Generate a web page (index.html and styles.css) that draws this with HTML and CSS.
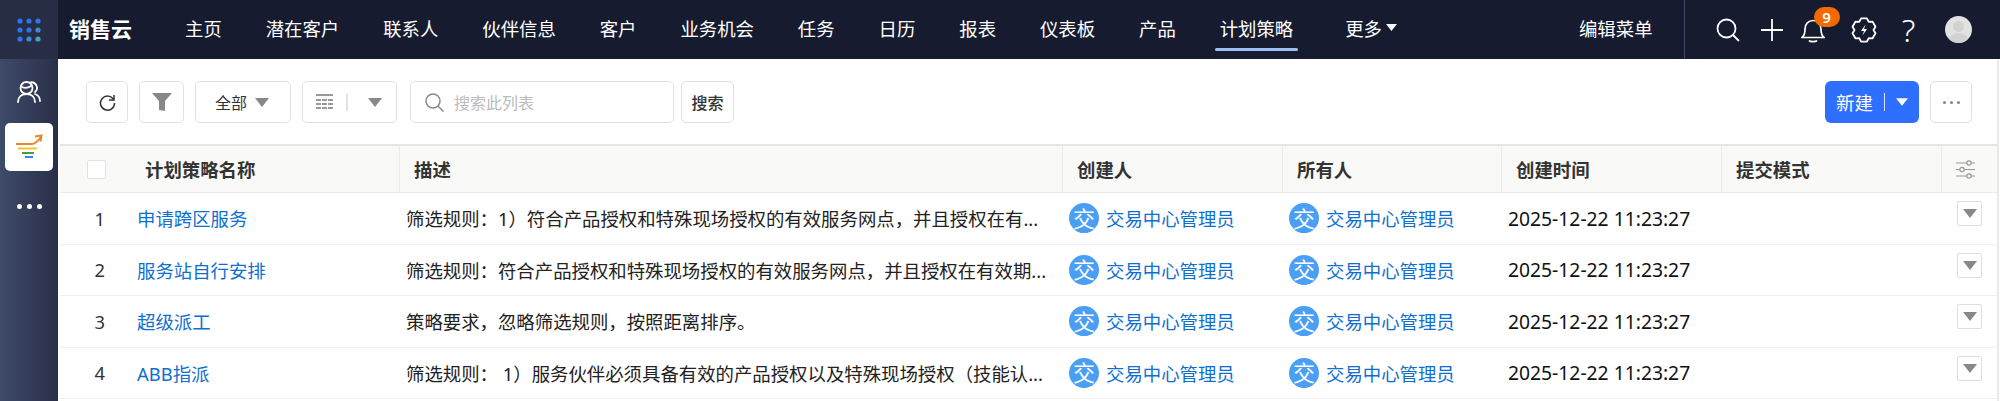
FILE: index.html
```html
<!DOCTYPE html>
<html lang="zh">
<head>
<meta charset="utf-8">
<title>计划策略</title>
<link rel="stylesheet" href="styles.css">
</head>
<body>
<svg class="defs" width="0" height="0" aria-hidden="true">
  <symbol id="caret" viewBox="0 0 14 9"><path d="M0 0H14L7 9Z" fill="currentColor"/></symbol>
</svg>

<header class="top">
  <div class="apps">
    <svg width="24" height="24" viewBox="0 0 24 24">
      <g fill="#2f74e8"><circle cx="3" cy="3" r="2.6"/><circle cx="12" cy="3" r="2.6"/><circle cx="21" cy="3" r="2.6"/><circle cx="3" cy="12" r="2.6"/><circle cx="12" cy="12" r="2.6"/><circle cx="3" cy="21" r="2.6"/></g>
      <g fill="#3a8ccf"><circle cx="21" cy="12" r="2.6"/><circle cx="12" cy="21" r="2.6"/></g>
      <circle cx="21" cy="21" r="2.6" fill="#45a5b8"/>
    </svg>
  </div>
  <div class="brand">销售云</div>
  <nav class="nav">
    <a>主页</a><a>潜在客户</a><a>联系人</a><a>伙伴信息</a><a>客户</a><a>业务机会</a><a>任务</a><a>日历</a><a>报表</a><a>仪表板</a><a>产品</a><a class="active">计划策略</a>
    <a class="more">更多<svg class="more-caret" width="11" height="7"><use href="#caret"/></svg></a>
  </nav>
  <a class="edit">编辑菜单</a>
  <div class="tools">
    <svg class="t-search" width="24" height="24" viewBox="0 0 24 24" fill="none" stroke="#fff" stroke-width="1.8"><circle cx="10.5" cy="10.5" r="9"/><path d="M17 17l6 6"/></svg>
    <svg class="t-plus" width="24" height="24" viewBox="0 0 24 24" fill="none" stroke="#fff" stroke-width="1.8"><path d="M12 1v22M1 12h22"/></svg>
    <div class="bell">
      <svg width="24" height="26" viewBox="0 0 24 26" fill="none" stroke="#fff" stroke-width="1.7"><path d="M1 20.5h22c-2.5-2-3-4-3-8.500C20 7 16.500 3.500 12 3.500S4 7 4 12c0 4.500-.5 6.500-3 8.500Z"/><path d="M8 23.500c1 1.500 7 1.500 8 0"/></svg>
      <span class="badge">9</span>
    </div>
    <svg class="t-gear" width="26" height="26" viewBox="0 0 26 26" fill="none" stroke="#fff" stroke-width="1.8" stroke-linejoin="round"><path d="M10.100 1.400H15.900L17.750 4.800 21.600 4.700 24.500 9.700 22.500 13 24.500 16.300 21.600 21.300 17.750 21.200 15.900 24.600H10.100L8.250 21.200 4.400 21.300 1.500 16.300 3.500 13 1.500 9.700 4.400 4.700 8.250 4.800Z"/><path d="M14.500 7.500L10 14h3l-1.500 4.500L16 12h-3Z" fill="#fff" stroke="none"/></svg>
    <span class="t-help">?</span>
    <div class="me"><span class="me-head"></span><span class="me-body"></span></div>
  </div>
</header>

<div class="main">
  <aside class="side">
    <svg class="side-user" width="24" height="24" viewBox="0 0 24 24" fill="none" stroke="#fff" stroke-width="1.800" stroke-linecap="round"><circle cx="9.500" cy="8" r="6"/><path d="M1 22c0-5 3.500-8 8.500-8s8.500 3 8.500 8"/><path d="M13 2.500a5.500 5.500 0 0 1 5 9.500M18 14c3 1 5 3.500 5 7"/><path d="M5 7c2 1 6 1 9-1"/></svg>
    <div class="side-card">
      <svg width="28" height="28" viewBox="0 0 28 28" fill="none" stroke-width="2">
        <path d="M1 11h16c3 0 6-3 9-7" stroke="#e8862a"/><path d="M20 3.500l6.500-1-1 6" stroke="#e8862a"/>
        <path d="M4 16.500h19" stroke="#f6c22c" transform="translate(-1 -1)"/>
        <path d="M7 20h12" stroke="#3aa04e"/><path d="M10 24h8" stroke="#3a82dc"/>
      </svg>
    </div>
    <div class="side-dots"><i></i><i></i><i></i></div>
  </aside>

  <section class="content">
    <div class="bar">
      <button class="btn b-refresh"><svg width="17" height="17" viewBox="0 0 17 17" fill="none" stroke="#333" stroke-width="1.500"><path d="M14.500 5.500A7 7 0 1 0 15.500 9"/><path d="M15 1v5h-5"/></svg></button>
      <button class="btn b-filter"><svg width="20" height="18" viewBox="0 0 20 18" fill="#888"><path d="M0 0h20l-7 8v10l-6-1V8Z"/></svg></button>
      <button class="btn b-all">全部<svg class="gray" width="14" height="9"><use href="#caret"/></svg></button>
      <button class="btn b-view">
        <svg width="17" height="16" viewBox="0 0 17 16" fill="#999"><path d="M0 0h17v2H0zM0 5h5v2H0zM6 5h5v2H6zM12 5h5v2h-5zM0 9h5v2H0zM6 9h5v2H6zM12 9h5v2h-5zM0 13h5v2H0zM6 13h5v2H6zM12 13h5v2h-5z"/></svg>
        <span class="v-sep"></span>
        <svg class="gray" width="14" height="9"><use href="#caret"/></svg>
      </button>
      <label class="search">
        <svg width="19" height="19" viewBox="0 0 19 19" fill="none" stroke="#8a8a8a" stroke-width="1.500"><circle cx="8" cy="8" r="7"/><path d="M13 13l5.500 5.500"/></svg>
        <span class="ph">搜索此列表</span>
      </label>
      <button class="btn b-search">搜索</button>
      <div class="spacer"></div>
      <button class="new">新建<span class="n-sep"></span><svg width="12" height="8"><use href="#caret"/></svg></button>
      <button class="btn b-more"><span class="m-dots"><i></i><i></i><i></i></span></button>
    </div>

    <div class="table">
      <div class="row head">
        <div class="cell"><span class="check"></span></div>
        <div class="cell c-name">计划策略名称</div>
        <div class="cell c-txt">描述</div>
        <div class="cell c-txt">创建人</div>
        <div class="cell c-txt">所有人</div>
        <div class="cell c-txt">创建时间</div>
        <div class="cell c-txt">提交模式</div>
        <div class="cell c-set"><svg width="19" height="19" viewBox="0 0 19 19" fill="none" stroke="#999" stroke-width="1.200"><path d="M0 3h11M15 3h4M0 9.500h4M8 9.500h11M0 16h11M15 16h4"/><circle cx="13" cy="3" r="2.200"/><circle cx="6" cy="9.500" r="2.200"/><circle cx="13" cy="16" r="2.200"/></svg></div>
      </div>

      <div class="row">
        <div class="cell num">1</div>
        <div class="cell link">申请跨区服务</div>
        <div class="cell desc">筛选规则：1）符合产品授权和特殊现场授权的有效服务网点，并且授权在有...</div>
        <div class="cell user"><span class="av">交</span><span>交易中心管理员</span></div>
        <div class="cell user"><span class="av">交</span><span>交易中心管理员</span></div>
        <div class="cell date">2025-12-22 11:23:27</div>
        <div class="cell"></div>
        <div class="cell act"><button class="mini"><svg width="14" height="9"><use href="#caret"/></svg></button></div>
      </div>

      <div class="row">
        <div class="cell num">2</div>
        <div class="cell link">服务站自行安排</div>
        <div class="cell desc">筛选规则：符合产品授权和特殊现场授权的有效服务网点，并且授权在有效期...</div>
        <div class="cell user"><span class="av">交</span><span>交易中心管理员</span></div>
        <div class="cell user"><span class="av">交</span><span>交易中心管理员</span></div>
        <div class="cell date">2025-12-22 11:23:27</div>
        <div class="cell"></div>
        <div class="cell act"><button class="mini"><svg width="14" height="9"><use href="#caret"/></svg></button></div>
      </div>

      <div class="row">
        <div class="cell num">3</div>
        <div class="cell link">超级派工</div>
        <div class="cell desc">策略要求，忽略筛选规则，按照距离排序。</div>
        <div class="cell user"><span class="av">交</span><span>交易中心管理员</span></div>
        <div class="cell user"><span class="av">交</span><span>交易中心管理员</span></div>
        <div class="cell date">2025-12-22 11:23:27</div>
        <div class="cell"></div>
        <div class="cell act"><button class="mini"><svg width="14" height="9"><use href="#caret"/></svg></button></div>
      </div>

      <div class="row">
        <div class="cell num">4</div>
        <div class="cell link">ABB指派</div>
        <div class="cell desc">筛选规则： 1）服务伙伴必须具备有效的产品授权以及特殊现场授权（技能认...</div>
        <div class="cell user"><span class="av">交</span><span>交易中心管理员</span></div>
        <div class="cell user"><span class="av">交</span><span>交易中心管理员</span></div>
        <div class="cell date">2025-12-22 11:23:27</div>
        <div class="cell"></div>
        <div class="cell act"><button class="mini"><svg width="14" height="9"><use href="#caret"/></svg></button></div>
      </div>
    </div>
  </section>
</div>
</body>
</html>
```
FILE: styles.css
```css
* { box-sizing: border-box; }
html, body { margin: 0; padding: 0; height: 401px; overflow: clip; background: #fff; }
body { font-family: "Noto Sans", "Noto Sans CJK SC", sans-serif; font-size: 18.4px; color: #222; }
.defs { position: absolute; }
button { font: inherit; margin: 0; padding: 0; cursor: pointer; }

/* top bar */
.top { display: flex; align-items: center; height: 59px; background: #161b2f; color: #fff; }
.apps { display: flex; align-items: center; justify-content: center; width: 58px; height: 59px; background: #262d45; flex: none; }
.brand { margin-left: 11px; padding-bottom: 4px; width: 116px; font-size: 21px; font-weight: 700; flex: none; }
.nav { display: flex; align-items: center; gap: 43.9px; flex: none; height: 59px; }
.nav a { position: relative; display: flex; align-items: center; height: 59px; padding-bottom: 4px; white-space: nowrap; }
.nav a.active::after { content: ""; position: absolute; left: -5px; right: -5px; bottom: 8px; height: 3px; background: #9cbff5; border-radius: 2px; }
.nav a.more { margin-left: 8px; }
.more-caret { margin-left: 4px; color: #fff; }
.edit { margin-left: 182px; padding-bottom: 4px; white-space: nowrap; flex: none; }
.tools { position: relative; display: flex; align-items: center; margin-left: 31px; padding-left: 31px; height: 59px; border-left: 1px solid #3e4a66; flex: 1; }
.t-plus { margin-left: 20px; }
.bell { position: relative; display: flex; margin-left: 17px; }
.badge { position: absolute; left: 13px; top: -10px; width: 26px; height: 20px; border-radius: 10px; background: #f56a00; color: #fff; font-size: 15px; font-weight: 600; line-height: 20px; text-align: center; }
.t-gear { margin-left: 26px; }
.t-help { margin-left: 20px; width: 24px; font-size: 32px; line-height: 1; text-align: center; font-family: "Noto Sans", sans-serif; font-weight: 300; }
.me { position: relative; margin-left: 24px; width: 27px; height: 27px; border-radius: 50%; background: #e2e2e2; overflow: hidden; flex: none; }
.me-head { position: absolute; left: 8px; top: 5px; width: 11px; height: 11px; border-radius: 50%; background: #d2d2d2; }
.me-body { position: absolute; left: 4px; top: 17px; width: 19px; height: 14px; border-radius: 50%; background: #d2d2d2; }

/* layout */
.main { display: flex; height: 342px; }
.side { display: flex; flex-direction: column; align-items: center; width: 58px; flex: none; padding-top: 21px; background: linear-gradient(90deg, #3e4b69, #292f48); }
.side-user { flex: none; }
.side-card { display: flex; align-items: center; justify-content: center; margin-top: 19px; width: 48px; height: 48px; border-radius: 5px; background: #fff; }
.side-dots { display: flex; gap: 5px; margin-top: 33px; }
.side-dots i { width: 5px; height: 5px; border-radius: 50%; background: #fff; }
.content { flex: none; width: 1939px; margin: 1px 0 0 2px; background: #fff; border-top-left-radius: 3px; border-right: 2px solid #e9e9e9; overflow: hidden; }

/* toolbar */
.bar { display: flex; align-items: center; height: 84px; padding: 0 25px 0 26px; }
.btn { display: flex; align-items: center; justify-content: center; height: 42px; background: #fff; border: 1.5px solid #e2e2e2; border-radius: 5px; color: #333; font-size: 16px; flex: none; }
.b-refresh { width: 42px; }
.b-filter { width: 45px; margin-left: 11px; }
.b-all { width: 96px; margin-left: 11px; gap: 8px; padding-right: 2px; }
.b-view { width: 95px; margin-left: 11px; justify-content: flex-start; padding-left: 13px; }
.gray { color: #888; }
.v-sep { width: 2px; height: 17px; background: #e2e2e2; margin: 0 20px 0 13px; }
.search { display: flex; align-items: center; width: 264px; height: 42px; margin-left: 13px; padding-left: 14px; border: 1.500px solid #e2e2e2; border-radius: 5px; flex: none; }
.ph { margin-left: 10px; font-size: 16px; color: #bbb; }
.b-search { width: 53px; margin-left: 7px; font-weight: 500; }
.spacer { flex: 1; }
.new { display: flex; align-items: center; width: 94px; height: 42px; padding-left: 11px; background: #2f6fff; border: 0; border-radius: 6px; color: #fff; font-size: 18.4px; flex: none; }
.n-sep { width: 1px; height: 18px; background: #dbe6ff; margin: 0 11px 0 11px; }
.b-more { width: 42px; margin-left: 11px; }
.m-dots { display: flex; gap: 4px; }
.m-dots i { width: 3px; height: 3px; border-radius: 50%; background: #888; }

/* table */
.table { width: 1937px; border-top: 2px solid #e6e6e6; }
.row { display: grid; grid-template-columns: 66px 274px 663px 220px 219px 220px 220px 55px; height: 51.5px; border-bottom: 1.500px solid #efefef; align-items: stretch; }
.row.head { height: 47px; background: #f9f9f7; font-weight: 700; color: #333; border-bottom-color: #ebebeb; }
.cell { display: flex; align-items: center; min-width: 0; }
.head .cell { border-right: 1.500px solid #ececec; }
.head .cell:nth-child(1), .head .cell:last-child { border-right: 0; }
.check { width: 19px; height: 19px; margin-left: 27px; background: #fff; border: 1.500px solid #e2e2e2; border-radius: 2px; }
.c-name { padding-left: 19px; }
.c-txt { padding-left: 14px; }
.c-set { justify-content: center; padding-right: 9px; }
.num { justify-content: flex-end; padding-right: 21px; color: #333; }
.link { padding-left: 11px; color: #0f6fd1; }
.desc { padding-left: 6px; color: #222; white-space: nowrap; }
.user { padding-left: 6px; gap: 7px; color: #0f6fd1; }
.av { position: relative; display: flex; align-items: center; justify-content: center; width: 30px; height: 30px; padding-bottom: 3px; flex: none; border-radius: 50%; background: #4a9ff5; color: #fff; font-family: "Noto Sans CJK SC", sans-serif; font-size: 22px; line-height: 26px; }
.av::after { content: ""; position: absolute; left: 0; top: 0; width: 30px; height: 30px; background: #4a9ff5; clip-path: path("M5.500 26.600 Q15 22.800 24.500 26.600 A15 15 0 0 1 5.500 26.600Z"); }
.date { padding-left: 6px; color: #111; font-size: 19.3px; }
.act { padding-left: 15px; padding-bottom: 9px; }
.mini { display: flex; align-items: center; justify-content: center; width: 25px; height: 25px; background: #fff; border: 1.500px solid #dedede; border-radius: 2px; color: #888; }
```
